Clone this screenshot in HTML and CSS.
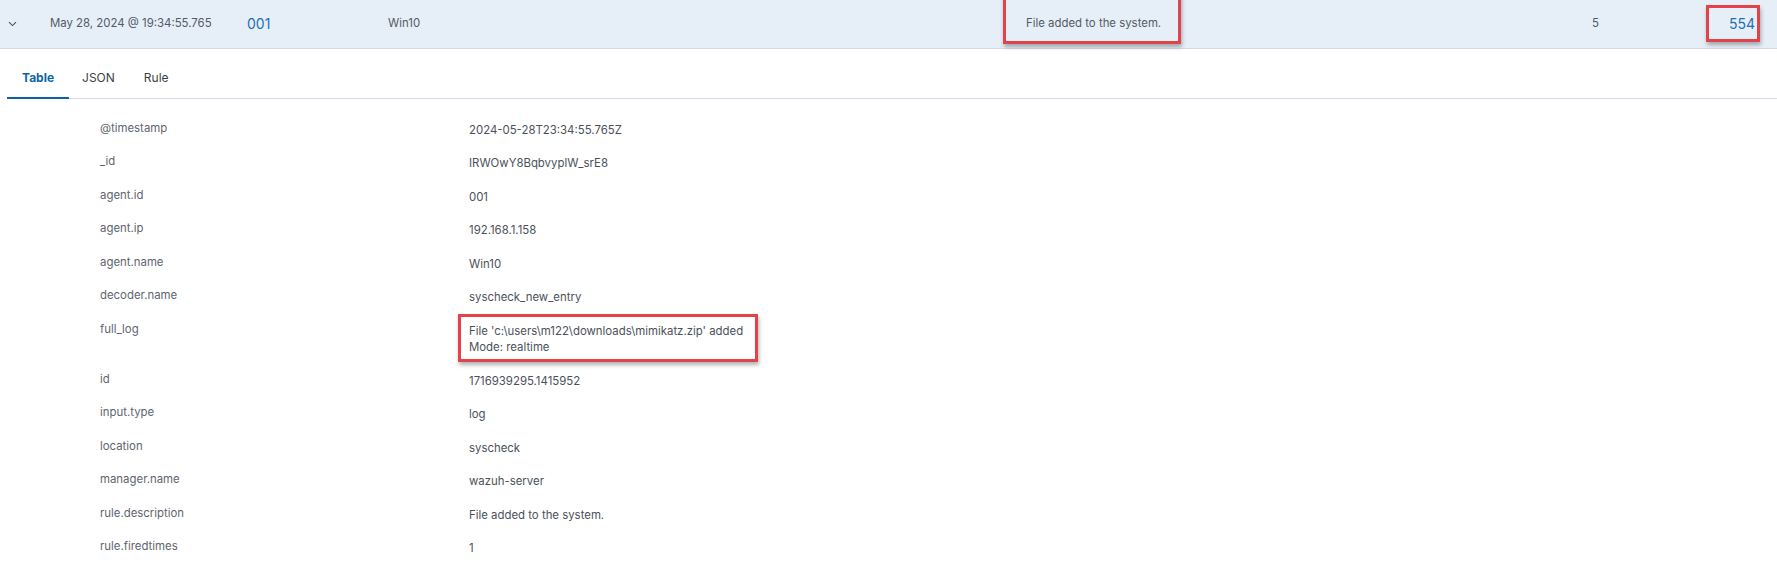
FILE: index.html
```html
<!DOCTYPE html>
<html lang="en">
<head>
<meta charset="utf-8">
<title>Event detail</title>
<link rel="stylesheet" href="styles.css">
</head>
<body>
<div class="event-row">
  <div class="cell cell-toggle">
    <svg class="chevron" width="9" height="6" viewBox="0 0 9 6"><path d="M1 1.2 L4.5 4.6 L8 1.2" fill="none" stroke="#4a4f58" stroke-width="1.1"/></svg>
  </div>
  <div class="cell cell-date">May 28, 2024 @ 19:34:55.765</div>
  <div class="cell cell-link">001</div>
  <div class="cell cell-name">Win10</div>
  <div class="cell cell-desc"><span class="mark">File added to the system.<span class="annot annot-desc"></span></span></div>
  <div class="cell cell-level">5</div>
  <div class="cell cell-rule"><span class="mark link">554<span class="annot annot-rule"></span></span></div>
</div>

<div class="tabs">
  <div class="tab active">Table</div>
  <div class="tab">JSON</div>
  <div class="tab">Rule</div>
</div>

<div class="doc-table">
  <div class="row"><div class="key">@timestamp</div><div class="val">2024-05-28T23:34:55.765Z</div></div>
  <div class="row"><div class="key">_id</div><div class="val">IRWOwY8BqbvyplW_srE8</div></div>
  <div class="row"><div class="key">agent.id</div><div class="val">001</div></div>
  <div class="row"><div class="key">agent.ip</div><div class="val">192.168.1.158</div></div>
  <div class="row"><div class="key">agent.name</div><div class="val">Win10</div></div>
  <div class="row"><div class="key">decoder.name</div><div class="val">syscheck_new_entry</div></div>
  <div class="row"><div class="key">full_log</div><div class="val"><span class="mark block">File 'c:\users\m122\downloads\mimikatz.zip' added<br>Mode: realtime<span class="annot annot-log"></span></span></div></div>
  <div class="row"><div class="key">id</div><div class="val">1716939295.1415952</div></div>
  <div class="row"><div class="key">input.type</div><div class="val">log</div></div>
  <div class="row"><div class="key">location</div><div class="val">syscheck</div></div>
  <div class="row"><div class="key">manager.name</div><div class="val">wazuh-server</div></div>
  <div class="row"><div class="key">rule.description</div><div class="val">File added to the system.</div></div>
  <div class="row"><div class="key">rule.firedtimes</div><div class="val">1</div></div>
</div>
</body>
</html>
```

FILE: styles.css
```css
* { box-sizing: border-box; }

html, body {
  margin: 0;
  padding: 0;
  background: #ffffff;
  font-family: Inter, "Noto Sans", "Liberation Sans", sans-serif;
  color: #4b515b;
  overflow: hidden;
}

.event-row {
  display: grid;
  grid-template-columns: 50px 197px 141px 638px 566px 117px 1fr;
  height: 49px;
  background: #e6eff8;
  border-bottom: 1px solid #d3dae6;
  font-size: 11.4px;
  color: #535a65;
}

.cell {
  display: flex;
  align-items: center;
  padding-bottom: 2px;
  white-space: nowrap;
}

.cell-toggle { padding-left: 8px; }
.chevron { display: block; margin-top: 1px; }

.cell-link {
  color: #1f6fb2;
  font-size: 14px;
}

.cell-rule {
  justify-content: flex-end;
  padding-right: 22px;
  font-size: 14px;
}

.link { color: #1f6fb2; }

.mark { position: relative; }
.mark.block { display: inline-block; vertical-align: top; }

.annot {
  position: absolute;
  border: 3px solid #e2434a;
  box-shadow: 1px 3px 4px rgba(0, 0, 0, 0.3);
  pointer-events: none;
}

.annot-desc { left: -23px; right: -20px; top: -23px; bottom: -14px; }
.annot-rule { left: -23px; right: -5px; top: -10px; bottom: -10px; }
.annot-log { left: -11px; right: -15px; top: -9px; bottom: -6px; }

.tabs {
  display: flex;
  margin-left: 7px;
  height: 50px;
  border-bottom: 1px solid #d3dae6;
}

.tab {
  display: flex;
  align-items: center;
  padding: 8px 16px 0 13px;
  font-size: 12px;
  color: #3a3f47;
  border-bottom: 2px solid transparent;
  margin-bottom: -1px;
}

.tab.active {
  color: #0b64a8;
  font-weight: 700;
  border-bottom-color: #0b64a8;
  padding-left: 15px;
  padding-right: 15px;
}

.doc-table {
  padding-top: 12px;
  font-size: 11.4px;
}

.row {
  display: grid;
  grid-template-columns: 369px 1fr;
  padding: 8.5px 0 8.5px 100px;
  line-height: 16.5px;
}

.key { color: #5e6570; }
.val { color: #4b515b; position: relative; top: 2px; }
```
